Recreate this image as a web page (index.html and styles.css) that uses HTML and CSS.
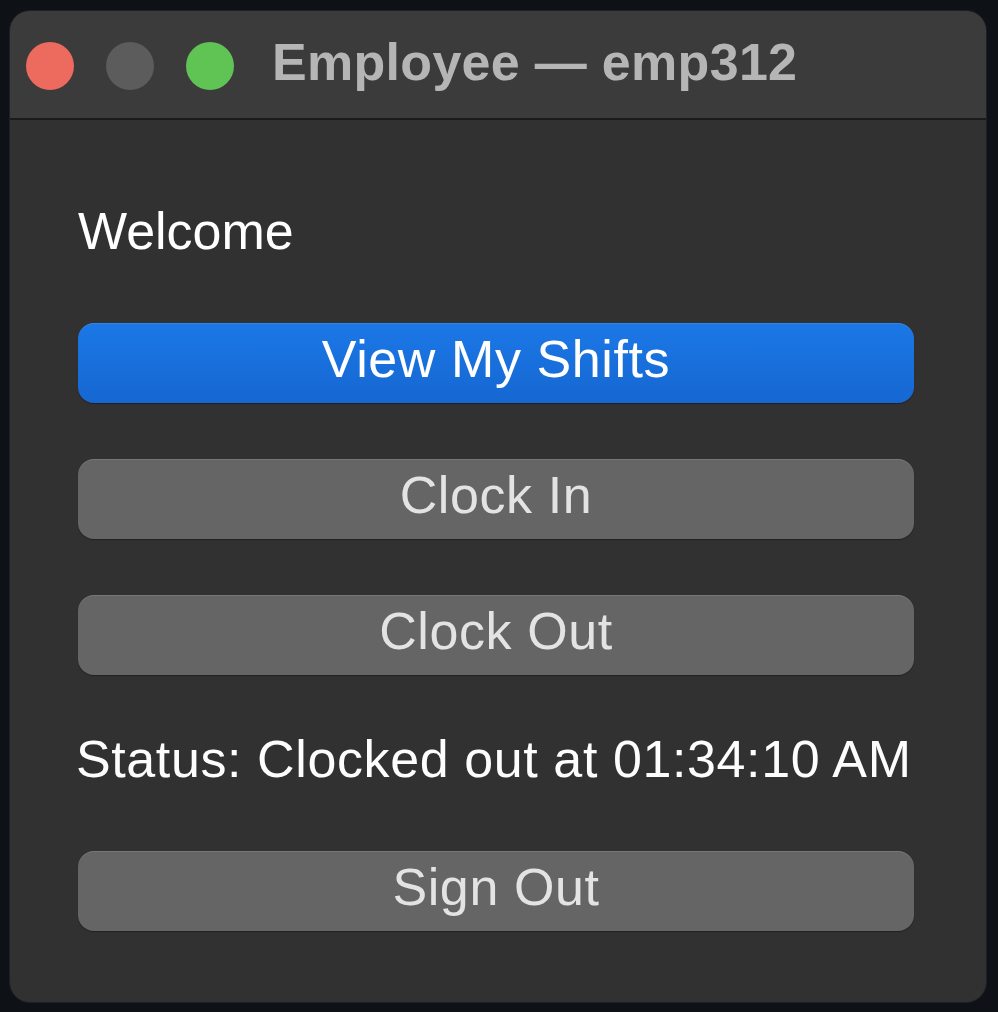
FILE: index.html
```html
<!DOCTYPE html>
<html lang="en">
<head>
<meta charset="utf-8">
<title>Employee — emp312</title>
<link rel="stylesheet" href="styles.css">
</head>
<body>
  <div class="window">
    <header class="titlebar">
      <div class="lights">
        <span class="light close"></span>
        <span class="light min"></span>
        <span class="light zoom"></span>
      </div>
      <div class="title">Employee — emp312</div>
    </header>
    <main class="content">
      <div class="label welcome">Welcome</div>
      <button class="btn primary first">View My Shifts</button>
      <button class="btn">Clock In</button>
      <button class="btn">Clock Out</button>
      <div class="label status">Status: Clocked out at 01:34:10 AM</div>
      <button class="btn last">Sign Out</button>
    </main>
  </div>
</body>
</html>
```

FILE: styles.css
```css
html, body {
  margin: 0;
  padding: 0;
  background: #0e1116;
  height: 100%;
}

body {
  font-family: "Liberation Sans", Arial, sans-serif;
  padding: 11px 0 0 10px;
  box-sizing: border-box;
}

.window {
  width: 976px;
  height: 991px;
  border-radius: 20px;
  overflow: hidden;
  background: #313131;
  display: flex;
  flex-direction: column;
  box-shadow: 0 0 0 1px rgba(255, 255, 255, 0.06);
}

.titlebar {
  height: 107px;
  background: #3b3b3b;
  border-bottom: 2px solid #1b1b1b;
  display: flex;
  align-items: center;
  padding-left: 16px;
  flex-shrink: 0;
}

.lights {
  display: flex;
  gap: 32px;
  margin-top: 2px;
}

.light {
  width: 48px;
  height: 48px;
  border-radius: 50%;
  display: block;
}

.light.close { background: #ec6a5e; }
.light.min { background: #5c5c5c; }
.light.zoom { background: #5fc454; }

.title {
  margin-left: 38px;
  font-weight: bold;
  font-size: 52px;
  line-height: 60px;
  letter-spacing: 0.3px;
  color: #b5b5b5;
  margin-top: -6px;
}

.content {
  display: flex;
  flex-direction: column;
  padding: 81px 72px 0 68px;
}

.label {
  font-size: 52px;
  line-height: 60px;
  color: #ffffff;
  white-space: nowrap;
}

.welcome {
  margin-bottom: 62px;
}

.status {
  margin-top: 54px;
  margin-bottom: 62px;
  margin-left: -2px;
  letter-spacing: 0.6px;
  color: #fdfdfd;
}

.btn {
  font-family: "Liberation Sans", Arial, sans-serif;
  font-size: 52px;
  line-height: 72px;
  letter-spacing: 0.6px;
  height: 80px;
  padding: 0 0 8px 0;
  box-sizing: border-box;
  border: none;
  border-radius: 16px;
  background: #656565;
  color: #e3e3e3;
  text-align: center;
  box-shadow: inset 0 1px 0 rgba(255, 255, 255, 0.12), 0 1px 1px rgba(0, 0, 0, 0.35);
  margin-top: 56px;
  width: 100%;
}

.btn.first {
  margin-top: 0;
}

.btn.last {
  margin-top: 0;
}

.btn.primary {
  background: linear-gradient(#1b78e6, #1667d1);
  color: #ffffff;
  box-shadow: inset 0 1px 0 rgba(255, 255, 255, 0.1), 0 1px 1px rgba(0, 0, 0, 0.35);
}
```
